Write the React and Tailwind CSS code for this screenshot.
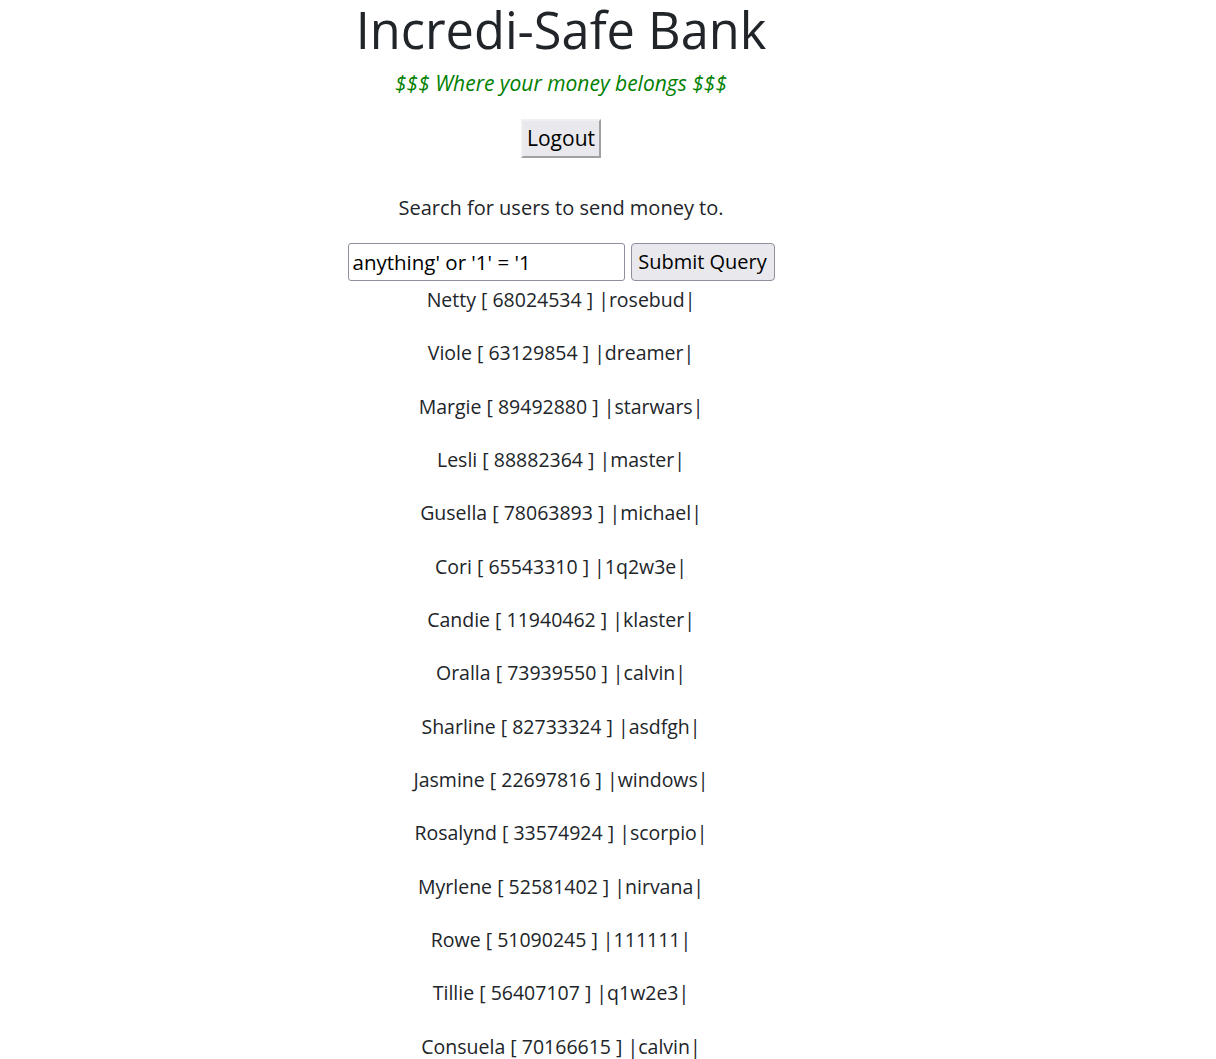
import React from "react";

const users = [
  ["Netty", "68024534", "rosebud"],
  ["Viole", "63129854", "dreamer"],
  ["Margie", "89492880", "starwars"],
  ["Lesli", "88882364", "master"],
  ["Gusella", "78063893", "michael"],
  ["Cori", "65543310", "1q2w3e"],
  ["Candie", "11940462", "klaster"],
  ["Oralla", "73939550", "calvin"],
  ["Sharline", "82733324", "asdfgh"],
  ["Jasmine", "22697816", "windows"],
  ["Rosalynd", "33574924", "scorpio"],
  ["Myrlene", "52581402", "nirvana"],
  ["Rowe", "51090245", "111111"],
  ["Tillie", "56407107", "q1w2e3"],
  ["Consuela", "70166615", "calvin"],
];

export default function App() {
  return (
    <div className="h-[1059px] overflow-hidden bg-white font-['Open_Sans',sans-serif] text-[#212529]">
      <div className="w-[1122px] text-center">
        <h1 className="h-[60px] text-[50.5px] leading-[60px] font-normal">Incredi-Safe Bank</h1>

        <p className="mt-[8px] text-[21px] leading-[30px] italic text-[#008000]">
          $$$ Where your money belongs $$$
        </p>

        <div className="mt-[21px] flex justify-center">
          <button className="h-[39px] w-[80px] border-2 border-t-[#f0f0f0] border-l-[#f0f0f0] border-b-[#a0a0a0] border-r-[#a0a0a0] bg-[#e9e9ed] text-[21px] text-black">
            Logout
          </button>
        </div>

        <p className="mt-[35px] text-[20px] leading-[30px]">Search for users to send money to.</p>

        <form className="mt-[20px] flex justify-center gap-[6px]" onSubmit={(e) => e.preventDefault()}>
          <input
            className="h-[38px] w-[277px] rounded-[3px] border border-[#8f8f9d] px-[4px] text-[20.5px] text-black outline-none"
            defaultValue="anything' or '1' = '1"
          />
          <button className="h-[38px] w-[144px] rounded-[4px] border border-[#8f8f9d] bg-[#e9e9ed] text-[20px] text-black">
            Submit Query
          </button>
        </form>

        <div className="mt-[4px]">
          {users.map(([name, id, pw]) => (
            <p key={name} className="mb-[23.33px] text-[19.5px] leading-[30px]">
              {name} [ {id} ] |{pw}|
            </p>
          ))}
        </div>
      </div>
    </div>
  );
}
